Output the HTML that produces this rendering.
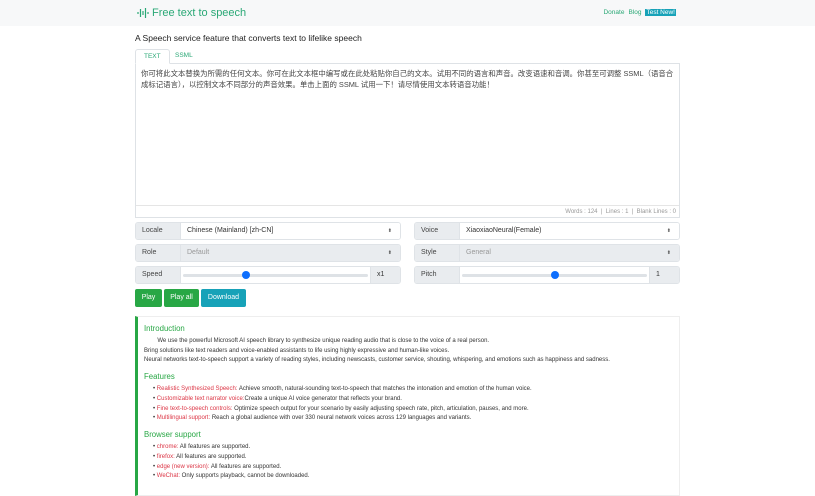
<!DOCTYPE html>
<html><head><meta charset="utf-8"><style>
*{box-sizing:border-box;margin:0;padding:0}
body{width:815px;height:480px;overflow:hidden;background:#fff;font-family:"Liberation Sans","Noto Sans CJK SC",sans-serif;color:#333}
.hdr{height:26px;background:#f7f8f9;position:relative}
.logo{position:absolute;left:137px;top:7px;color:#2aa876;font-size:11px;display:flex;align-items:center}
.links{position:absolute;right:139px;top:9px;font-size:6.5px;color:#2aa876}
.links span{margin-left:4px}
.links .new{background:#17a2b8;color:#fff;padding:0 1px}
.sub{position:absolute;left:135px;top:33px;font-size:8.5px;color:#222}
.tabs{position:absolute;left:135px;top:49px;height:14px;font-size:6.5px;color:#2aa876}
.tab{position:absolute;top:0;height:15px;line-height:14px;padding:0 8px}
.tab.a{left:0;border:1px solid #dee2e6;border-bottom-color:#fff;border-radius:3px 3px 0 0;background:#fff;z-index:2}
.ta{position:absolute;left:135px;top:63px;width:545px;height:155px;border:1px solid #dee2e6}
.ta p{padding:4px 5px;font-size:7.4px;line-height:11px;color:#444}
.cnt{position:absolute;left:0;right:0;top:141px;height:13px;border-top:1px solid #e5e5e5;font-size:6px;color:#999;text-align:right;padding-right:3px;line-height:12px}
.row{position:absolute;height:18px;width:266px;display:flex;font-size:7px;border:1px solid #dfe3e7;border-radius:3px;overflow:hidden}
.row .l{width:45px;background:#e9ecef;padding-left:6px;line-height:16px;color:#444;border-right:1px solid #dfe3e7}
.row .v{flex:1;background:#fff;padding-left:6px;line-height:16px;position:relative}
.row .v.d{background:#e9ecef;color:#999}
.row .v i{position:absolute;right:8px;font-style:normal;font-size:5px;color:#555}
.sl{flex:1;background:#fff;position:relative}
.sl:before{content:"";position:absolute;left:2px;right:2px;top:7px;height:3px;background:#dee2e6;border-radius:2px}
.sl b{position:absolute;top:4px;width:8px;height:8px;border-radius:50%;background:#0d6efd}
.row .r{width:30px;background:#e9ecef;line-height:16px;padding-left:6px;border-left:1px solid #dfe3e7}
.btn{position:absolute;top:289px;height:18px;color:#fff;font-size:7px;line-height:18px;text-align:center;border-radius:2px}
.card{position:absolute;left:135px;top:316px;width:545px;height:180px;border:1px solid #eee;border-left:3px solid #28a745;padding:5px 6px;font-size:6px;line-height:9.8px;color:#333}
.card h4{color:#28a745;font-weight:normal;font-size:7.8px;margin:2px 0 3px}
.card ul{list-style:none;padding-left:9px}
.card li:before{content:"• ";}
.card em{font-style:normal;color:#dc3545}
</style></head><body>
<div class="hdr">
<div class="logo"><svg width="12" height="12" viewBox="0 0 12 12" style="margin-right:3px"><g stroke="#2aa876" stroke-width="1.2"><line x1="1" y1="5" x2="1" y2="7"/><line x1="3.5" y1="2" x2="3.5" y2="10"/><line x1="6" y1="4" x2="6" y2="8"/><line x1="8.5" y1="1" x2="8.5" y2="11"/><line x1="11" y1="5" x2="11" y2="7"/></g></svg>Free text to speech</div>
<div class="links"><span>Donate</span><span>Blog</span><span class="new">Test New!</span></div>
</div>
<div class="sub">A Speech service feature that converts text to lifelike speech</div>
<div class="tabs"><div class="tab a">TEXT</div><div class="tab" style="left:32px">SSML</div></div>
<div class="ta"><p>你可将此文本替换为所需的任何文本。你可在此文本框中编写或在此处粘贴你自己的文本。试用不同的语言和声音。改变语速和音调。你甚至可调整 SSML（语音合成标记语言），以控制文本不同部分的声音效果。单击上面的 SSML 试用一下！请尽情使用文本转语音功能！</p>
<div class="cnt">Words : 124 &nbsp;|&nbsp; Lines : 1 &nbsp;|&nbsp; Blank Lines : 0</div></div>
<div class="row" style="left:135px;top:222px"><div class="l">Locale</div><div class="v">Chinese (Mainland) [zh-CN]<i>⬍</i></div></div>
<div class="row" style="left:414px;top:222px"><div class="l">Voice</div><div class="v">XiaoxiaoNeural(Female)<i>⬍</i></div></div>
<div class="row" style="left:135px;top:244px"><div class="l">Role</div><div class="v d">Default<i>⬍</i></div></div>
<div class="row" style="left:414px;top:244px"><div class="l">Style</div><div class="v d">General<i>⬍</i></div></div>
<div class="row" style="left:135px;top:266px"><div class="l">Speed</div><div class="sl"><b style="left:61px"></b></div><div class="r">x1</div></div>
<div class="row" style="left:414px;top:266px"><div class="l">Pitch</div><div class="sl"><b style="left:91px"></b></div><div class="r">1</div></div>
<div class="btn" style="left:135px;width:27px;background:#28a745">Play</div>
<div class="btn" style="left:164px;width:35px;background:#28a745">Play all</div>
<div class="btn" style="left:201px;width:45px;background:#17a2b8">Download</div>
<div class="card">
<h4>Introduction</h4>
<div>&nbsp; &nbsp; &nbsp; &nbsp; We use the powerful Microsoft AI speech library to synthesize unique reading audio that is close to the voice of a real person.</div>
<div>Bring solutions like text readers and voice-enabled assistants to life using highly expressive and human-like voices.</div>
<div>Neural networks text-to-speech support a variety of reading styles, including newscasts, customer service, shouting, whispering, and emotions such as happiness and sadness.</div>
<h4 style="margin-top:6px">Features</h4>
<ul><li><em>Realistic Synthesized Speech:</em> Achieve smooth, natural-sounding text-to-speech that matches the intonation and emotion of the human voice.</li>
<li><em>Customizable text narrator voice:</em>Create a unique AI voice generator that reflects your brand.</li>
<li><em>Fine text-to-speech controls:</em> Optimize speech output for your scenario by easily adjusting speech rate, pitch, articulation, pauses, and more.</li>
<li><em>Multilingual support:</em> Reach a global audience with over 330 neural network voices across 129 languages and variants.</li></ul>
<h4 style="margin-top:6px">Browser support</h4>
<ul><li><em>chrome:</em> All features are supported.</li><li><em>firefox:</em> All features are supported.</li><li><em>edge (new version):</em> All features are supported.</li><li><em>WeChat:</em> Only supports playback, cannot be downloaded.</li></ul>
</div>
</body></html>
